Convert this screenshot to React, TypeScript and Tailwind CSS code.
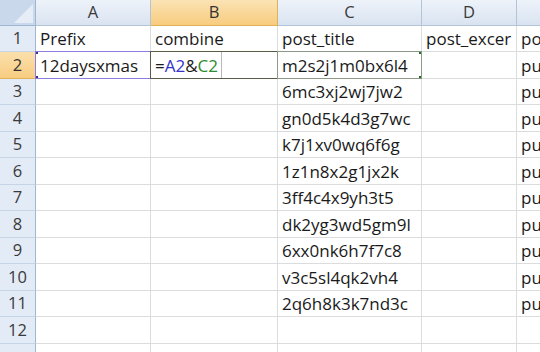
import React from "react";

const cols = [
  { key: "A", w: 115 },
  { key: "B", w: 127 },
  { key: "C", w: 144 },
  { key: "D", w: 95 },
  { key: "E", w: 60 },
];

const codes = [
  "m2s2j1m0bx6l4",
  "6mc3xj2wj7jw2",
  "gn0d5k4d3g7wc",
  "k7j1xv0wq6f6g",
  "1z1n8x2g1jx2k",
  "3ff4c4x9yh3t5",
  "dk2yg3wd5gm9l",
  "6xx0nk6h7f7c8",
  "v3c5sl4qk2vh4",
  "2q6h8k3k7nd3c",
];

const heights = [26, 27, 26, 27, 26, 27, 26, 27, 26, 27, 26, 27, 26];

function cellText(r: number, c: number): React.ReactNode {
  if (r === 1) return ["Prefix", "combine", "post_title", "post_excer", "post_status"][c];
  if (r >= 2 && r <= 11) {
    if (c === 0 && r === 2) return "12daysxmas";
    if (c === 1 && r === 2)
      return (
        <>
          <span>=</span>
          <span className="text-[#3333cc]">A2</span>
          <span>&amp;</span>
          <span className="text-[#2e8b2e]">C2</span>
        </>
      );
    if (c === 2) return codes[r - 2];
    if (c === 4) return "publish";
  }
  return null;
}

function cellBorder(r: number, ci: number) {
  if (r === 2 && ci === 0) return "border border-[#8a7fe0] -ml-px -mt-px";
  if (r === 2 && ci === 1) return "border border-[#5b5b4a] -ml-px -mt-px";
  if (r === 2 && ci === 2) return "border border-[#8a9a86] -ml-px -mt-px";
  return "border-r border-b border-[#dadcdd]";
}

export default function App() {
  return (
    <div
      className="w-[540px] h-[352px] overflow-hidden bg-white text-[#1a1a1a]"
      style={{ fontFamily: "'Open Sans', Lato, sans-serif" }}
    >
      {/* header row */}
      <div className="flex h-[26px]">
        <div className="relative w-[36px] shrink-0 bg-[#c9d8eb] border-r border-b border-[#9eb6ce] overflow-hidden">
          <svg className="absolute right-[2px] bottom-[2px]" width="19" height="19" viewBox="0 0 19 19">
            <polygon points="19,0 19,19 0,19" fill="#e6edf6" />
          </svg>
        </div>
        {cols.map((c) => (
          <div
            key={c.key}
            style={{ width: c.w }}
            className={`shrink-0 flex items-center justify-center text-[16.5px] border-r border-b ${
              c.key === "B"
                ? "bg-gradient-to-b from-[#fbe3b4] to-[#f7cc7e] border-[#e3b05a] text-[#333]"
                : "bg-gradient-to-b from-[#eef3fa] to-[#d9e3f0] border-[#b3c4d9] text-[#3a3a3a]"
            }`}
          >
            {c.key}
          </div>
        ))}
      </div>

      {heights.map((h, i) => {
        const r = i + 1;
        return (
          <div key={r} className="flex" style={{ height: h }}>
            <div
              className={`w-[36px] shrink-0 flex items-center justify-center text-[16.5px] border-r border-b ${
                r === 2
                  ? "bg-gradient-to-b from-[#fbe0ad] to-[#f7cd80] border-[#e3b05a] text-[#333]"
                  : "bg-[#e3ebf6] border-r-[#9eb6ce] border-b-[#c6d4e6] text-[#3a3a3a]"
              }`}
            >
              {r <= 12 ? r : ""}
            </div>
            {cols.map((c, ci) => {
              const t = cellText(r, ci);
              const sel = r === 2 && ci <= 2;
              return (
                <div
                  key={c.key}
                  style={{ width: sel ? c.w + 1 : c.w, height: sel ? h + 1 : undefined }}
                  className={`relative shrink-0 ${cellBorder(r, ci)} flex items-center pl-[4px] pt-[1px] text-[17px] whitespace-nowrap overflow-hidden`}
                >
                  {t}
                  {r === 2 && ci === 0 && (
                    <>
                      <div className="absolute left-[-1px] top-[-1px] w-[3px] h-[3px] bg-[#3b2f8f]" />
                      <div className="absolute left-[-1px] bottom-[-1px] w-[3px] h-[3px] bg-[#3b2f8f]" />
                    </>
                  )}
                  {r === 2 && ci === 1 && (
                    <div className="absolute left-[70px] top-0 bottom-0 w-px bg-[#b8b8b8]" />
                  )}
                  {r === 2 && ci === 2 && (
                    <>
                      <div className="absolute right-[-1px] top-[-1px] w-[3px] h-[3px] bg-[#1f6b1f]" />
                      <div className="absolute right-[-1px] bottom-[-1px] w-[3px] h-[3px] bg-[#1f6b1f]" />
                    </>
                  )}
                </div>
              );
            })}
          </div>
        );
      })}
    </div>
  );
}
